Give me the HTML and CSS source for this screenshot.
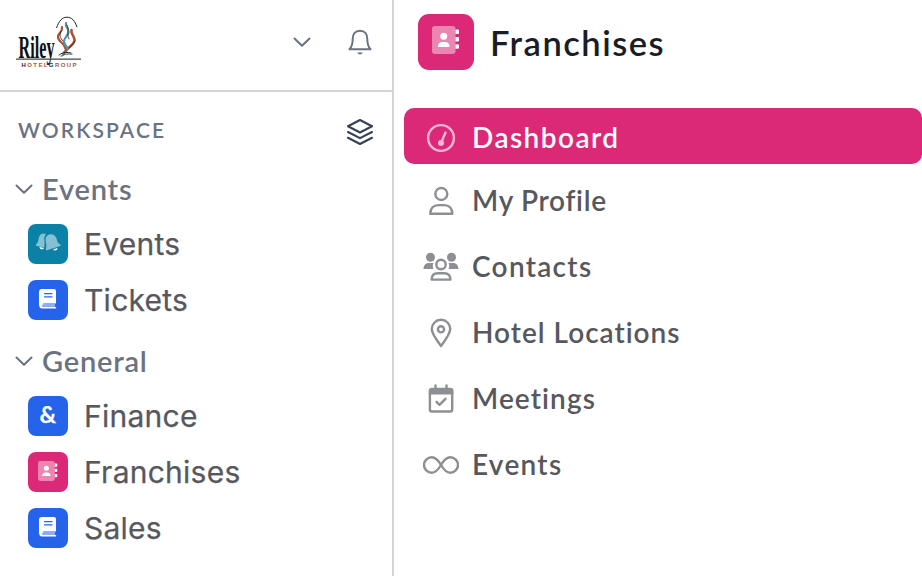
FILE: index.html
```html
<!DOCTYPE html>
<html lang="en">
<head>
<meta charset="utf-8">
<title>Franchises</title>
<link rel="stylesheet" href="styles.css">
</head>
<body>
<svg class="defs" aria-hidden="true">
  <symbol id="chevron" viewBox="0 0 18 12"><path d="M1.500 2.500 9 9.800l7.500-7.300" fill="none" stroke="currentColor" stroke-width="2" stroke-linecap="round" stroke-linejoin="round"/></symbol>
  <symbol id="book" viewBox="0 0 20 22">
    <path d="M4 1h12a2 2 0 0 1 2 2v12.500H4a3 3 0 0 0-2.500 1.500L1 16V4a3 3 0 0 1 3-3Z" fill="#fff"/>
    <path d="M3.500 15.500H17V19H3.500Z" fill="#8fadf7"/>
    <path d="M1 16C1 19 2 20.600 4 20.600h13.500a.8.800 0 0 0 0-1.600H5.200c-1.800 0-1.800-2.600 0-2.600V15H2Z" fill="#fff"/>
    <path d="M6.500 5.600h7.500M6.500 8.800h7.500" stroke="#2563eb" stroke-width="1.300" stroke-linecap="round"/>
  </symbol>
  <symbol id="address" viewBox="0 0 28 28">
    <rect x="0" width="23.500" height="28" rx="3" fill="#fff" fill-opacity=".44"/>
    <circle cx="11.700" cy="10.300" r="3.500" fill="#fff"/>
    <path d="M5.800 21c0-3.300 1.900-5 4.600-5H13c2.700 0 4.600 1.700 4.600 5Z" fill="#fff"/>
    <path d="M23.500 3.500h2.500a1 1 0 0 1 1 1V7a1 1 0 0 1-1 1h-2.500ZM23.500 11h2.500a1 1 0 0 1 1 1v2.500a1 1 0 0 1-1 1h-2.500ZM23.500 18.300h2.500a1 1 0 0 1 1 1v2.500a1 1 0 0 1-1 1h-2.500Z" fill="#fff"/>
  </symbol>
</svg>
<div class="app">
  <aside class="sidebar">
    <header class="brand">
      <svg class="logo" viewBox="0 0 70 56" role="img" aria-label="Riley Hotel Group">
        <text class="logo-name" x="3.500" y="44" textLength="36" lengthAdjust="spacingAndGlyphs">Riley</text>
        <path d="M1 45.200h65" stroke="#444" stroke-width="1.200"/>
        <path d="M41.500 14C44 7 47 3.200 52 3.200c5 0 8 3.800 10 10" fill="none" stroke="#222" stroke-width="1"/>
        <g fill="none" stroke-linecap="round">
          <path d="M47 13c1 5-4 6-4 10 0 5 7 6 7.500 12" stroke="#a65334" stroke-width="2.200"/>
          <path d="M56.500 16c-1 4 3 6 3 10 0 5-8 8-11 14" stroke="#a65334" stroke-width="2.600"/>
          <path d="M51 9c-1 4 3 6 2.500 9-.5 4-5 6-4.500 10 .5 3 3 4 3.500 7" stroke="#4f93a8" stroke-width="2.200"/>
          <path d="M52 11c3 5-1 9 2 14M46 17c-2 4-1 7 2 10M60 27c-1 3-4 5-6 7" stroke="#3d2b26" stroke-width=".9"/>
          <path d="M44 41c4-3 9-3 12-2" stroke="#222" stroke-width="1"/>
          <path d="M46 42.200c4-2.500 8-2.500 11-2" stroke="#347b91" stroke-width="1.200"/>
        </g>
        <text class="logo-tag" x="6.500" y="53" textLength="55"><tspan fill="#222">H</tspan>OTEL<tspan fill="#222">G</tspan>ROUP</text>
      </svg>
      <svg class="chevron switch"><use href="#chevron"/></svg>
      <svg class="bell" viewBox="0 0 24 27"><path d="M1.500 20.200h21c-2.500-2.500-3.200-4.500-3.200-10.200C19.300 5 16.500 1.700 12 1.700S4.700 5 4.700 10c0 5.700-.7 7.700-3.200 10.200Z" fill="none" stroke="currentColor" stroke-width="2" stroke-linejoin="round"/><path d="M9.300 23.600c.8 2.600 4.600 2.600 5.400 0Z" fill="currentColor"/></svg>
    </header>
    <div class="workspace">
      <span>WORKSPACE</span>
      <svg class="layers" viewBox="0 0 28 28"><path d="M14 2 26 8.300 14 14.500 2 8.300ZM2 14l12 6.100L26 14M2 19.800 14 26l12-6.200" fill="none" stroke="currentColor" stroke-width="2.100" stroke-linejoin="round" stroke-linecap="round"/></svg>
    </div>
    <section class="group">
      <h2><svg class="chevron"><use href="#chevron"/></svg><span>Events</span></h2>
      <a class="item"><i class="tile teal"><svg class="bells" viewBox="0 0 26 19">
        <path d="M6 1.200C7.500.2 9.500.2 11 1 9 3 9 6 9.600 9L9.300 14.600 1.600 12.900C.6 12.600.6 11.900 1.200 11.400 4.500 8.500 2.500 4 6 1.200Z" fill="#fff" fill-opacity=".5"/>
        <path d="M13.500 1.800C17.500.2 21 2.500 21.800 6.500 22.300 9 23 10.200 25.200 11.400 26 12 25.900 12.700 25 13.100L12 17.200C11 17.400 10.600 16.700 10.900 16 12 13.500 11.200 11 10.700 8 10.300 5 11.200 2.800 13.500 1.800Z" fill="#fff" fill-opacity=".5"/>
        <path d="M4.500 14 9 15c-.6 2.300-4.600 1.500-4.500-1ZM18 16.500l4.300-1.400c.6 2.500-2.800 3.400-4.300 1.400Z" fill="#fff"/></svg></i><span>Events</span></a>
      <a class="item"><i class="tile blue"><svg class="book"><use href="#book"/></svg></i><span>Tickets</span></a>
    </section>
    <section class="group">
      <h2><svg class="chevron"><use href="#chevron"/></svg><span>General</span></h2>
      <a class="item"><i class="tile blue amp">&amp;</i><span>Finance</span></a>
      <a class="item"><i class="tile pink"><svg class="address"><use href="#address"/></svg></i><span>Franchises</span></a>
      <a class="item"><i class="tile blue"><svg class="book"><use href="#book"/></svg></i><span>Sales</span></a>
    </section>
  </aside>
  <main class="panel">
    <header class="title"><i class="tile pink large"><svg class="address"><use href="#address"/></svg></i><h1>Franchises</h1></header>
    <nav>
      <a class="link active"><svg viewBox="0 0 36 30"><g fill="none" stroke="currentColor" stroke-width="2.400" stroke-linecap="round"><circle cx="18" cy="15" r="12.900"/><path d="m18.500 19 4-9.500"/></g><circle cx="18" cy="20" r="3" fill="currentColor"/></svg><span class="dashboard">Dashboard</span></a>
      <a class="link"><svg viewBox="0 0 36 30"><g fill="none" stroke="currentColor" stroke-width="2.400" stroke-linejoin="round"><circle cx="18.300" cy="8" r="6"/><path d="M7.300 27.800c0-5.800 3.300-8.700 8-8.700h6c4.700 0 8 2.900 8 8.700Z"/></g></svg><span class="profile">My Profile</span></a>
      <a class="link"><svg viewBox="0 0 36 30"><g fill="currentColor"><circle cx="7.500" cy="5.300" r="4.500"/><circle cx="28.500" cy="5.300" r="4.500"/><path d="M.5 17C.7 13 2.800 11 6 11h4.500c-1 2-1 4 0 6ZM35.500 17c-.2-4-2.300-6-5.500-6h-4.500c1 2 1 4 0 6Z"/></g><g fill="none" stroke="currentColor" stroke-width="2.400" stroke-linejoin="round"><circle cx="18" cy="12.500" r="4.700"/><path d="M8.600 27.600c0-4.200 2.500-6.300 6.400-6.300h6c3.900 0 6.400 2.100 6.400 6.300Z"/></g></svg><span>Contacts</span></a>
      <a class="link"><svg viewBox="0 0 36 30"><g fill="none" stroke="currentColor" stroke-width="2.400" stroke-linejoin="round"><path d="M18 28C14 22.500 8.800 16 8.800 11a9.200 9.200 0 0 1 18.400 0C27.200 16 22 22.500 18 28Z"/><circle cx="18" cy="11.300" r="3.100"/></g></svg><span class="locations">Hotel Locations</span></a>
      <a class="link"><svg viewBox="0 0 36 30"><path d="M5.800 9V7a3 3 0 0 1 3-3h18.500a3 3 0 0 1 3 3v3.500H5.800Z" fill="currentColor"/><g fill="none" stroke="currentColor" stroke-width="2.400" stroke-linecap="round" stroke-linejoin="round"><rect x="6.900" y="5" width="22.300" height="22.500" rx="2"/><path d="M12.500 4.500V1.500M23.500 4.500V1.500M13.500 17.800l3 3 6-6"/></g></svg><span class="meetings">Meetings</span></a>
      <a class="link"><svg viewBox="0 0 36 30"><path d="M18 15c-3-5-5.500-7.700-9.300-7.700a7.700 7.700 0 0 0 0 15.400C12.500 22.700 15 20 18 15s5.500-7.700 9.300-7.700a7.700 7.700 0 0 1 0 15.400C23.500 22.700 21 20 18 15Z" fill="none" stroke="currentColor" stroke-width="2.400"/></svg><span>Events</span></a>
    </nav>
  </main>
</div>
</body>
</html>
```
FILE: styles.css
```css
* { box-sizing: border-box; }
body { margin: 0; background: #fff; font-family: Lato, sans-serif; font-variant-ligatures: none; overflow: hidden; }
.defs { display: none; }
svg { display: block; flex: none; }
h1, h2 { margin: 0; }
.app { display: flex; width: 922px; height: 576px; }

.sidebar { flex: none; width: 394px; border-right: 2px solid #d1d5db; color: #6b7280; }
.brand { display: flex; align-items: center; height: 92px; padding: 0 20px 6px 15px; border-bottom: 2px solid #d1d5db; }
.logo { width: 70px; height: 56px; overflow: visible; }
.logo-name { font: 700 32px "Liberation Serif", serif; fill: #111; }
.logo-tag { font: 700 6px "Liberation Sans", sans-serif; fill: #9b5a48; }
.chevron { width: 18px; height: 12px; }
.switch { margin-left: auto; margin-right: 37px; }
.bell { width: 24px; height: 27px; }
.workspace { display: flex; align-items: flex-start; justify-content: space-between; height: 70px; padding: 25px 18px 0; font-size: 21px; line-height: 26px; font-weight: 600; letter-spacing: 2.1px; }
.layers { width: 28px; height: 28px; margin-top: 1px; color: #374151; }
.group + .group { margin-top: 6px; }
.group h2 { display: flex; align-items: center; gap: 9px; height: 54px; padding-left: 15px; font-size: 29px; font-weight: 600; line-height: 36px; letter-spacing: .8px; }
.item { display: flex; align-items: center; gap: 16px; height: 56px; padding-left: 28px; font: 400 30px/40px Inter, sans-serif; letter-spacing: .25px; color: #57585d; -webkit-text-stroke: .25px currentColor; }
.tile { display: grid; place-items: center; flex: none; width: 40px; height: 40px; padding-bottom: 3px; border-radius: 8px; color: #fff; }
.teal { background: #0b81a8; }
.blue { background: #2563eb; }
.pink { background: #db2877; }
.bells { width: 26px; height: 19px; }
.book { width: 20px; height: 22px; }
.address { width: 20px; height: 20px; }
.amp { font: 700 23px/37px Lato, sans-serif; }

.panel { flex: 1; padding: 14px 0 0 10px; }
.title { display: flex; align-items: center; gap: 16px; height: 56px; padding-left: 14px; }
.title h1 { padding-top: 2px; font-size: 34.5px; line-height: 40px; font-weight: 600; letter-spacing: 1.5px; color: #1b1d26; }
.large { width: 56px; height: 56px; border-radius: 11px; padding: 0 1px 4px 0; }
.large .address { width: 28px; height: 28px; }
nav { display: flex; flex-direction: column; gap: 10px; margin-top: 38px; }
.link { display: flex; align-items: center; gap: 13px; height: 56px; padding: 1px 0 0 19px; font-size: 28px; line-height: 36px; font-weight: 600; letter-spacing: 1.3px; color: #57585d; }
.link span { padding-bottom: 2px; }
.link svg { width: 36px; height: 30px; color: #8e8f93; }
.link.active { margin-bottom: -2px; padding-top: 3px; border-radius: 10px; background: #db2877; color: #fff; }
.link.active svg { color: #ffb5d6; }
.dashboard { letter-spacing: 1.45px; }
.profile { letter-spacing: .7px; }
.locations { letter-spacing: 1px; }
.meetings { letter-spacing: 1.1px; }
```
